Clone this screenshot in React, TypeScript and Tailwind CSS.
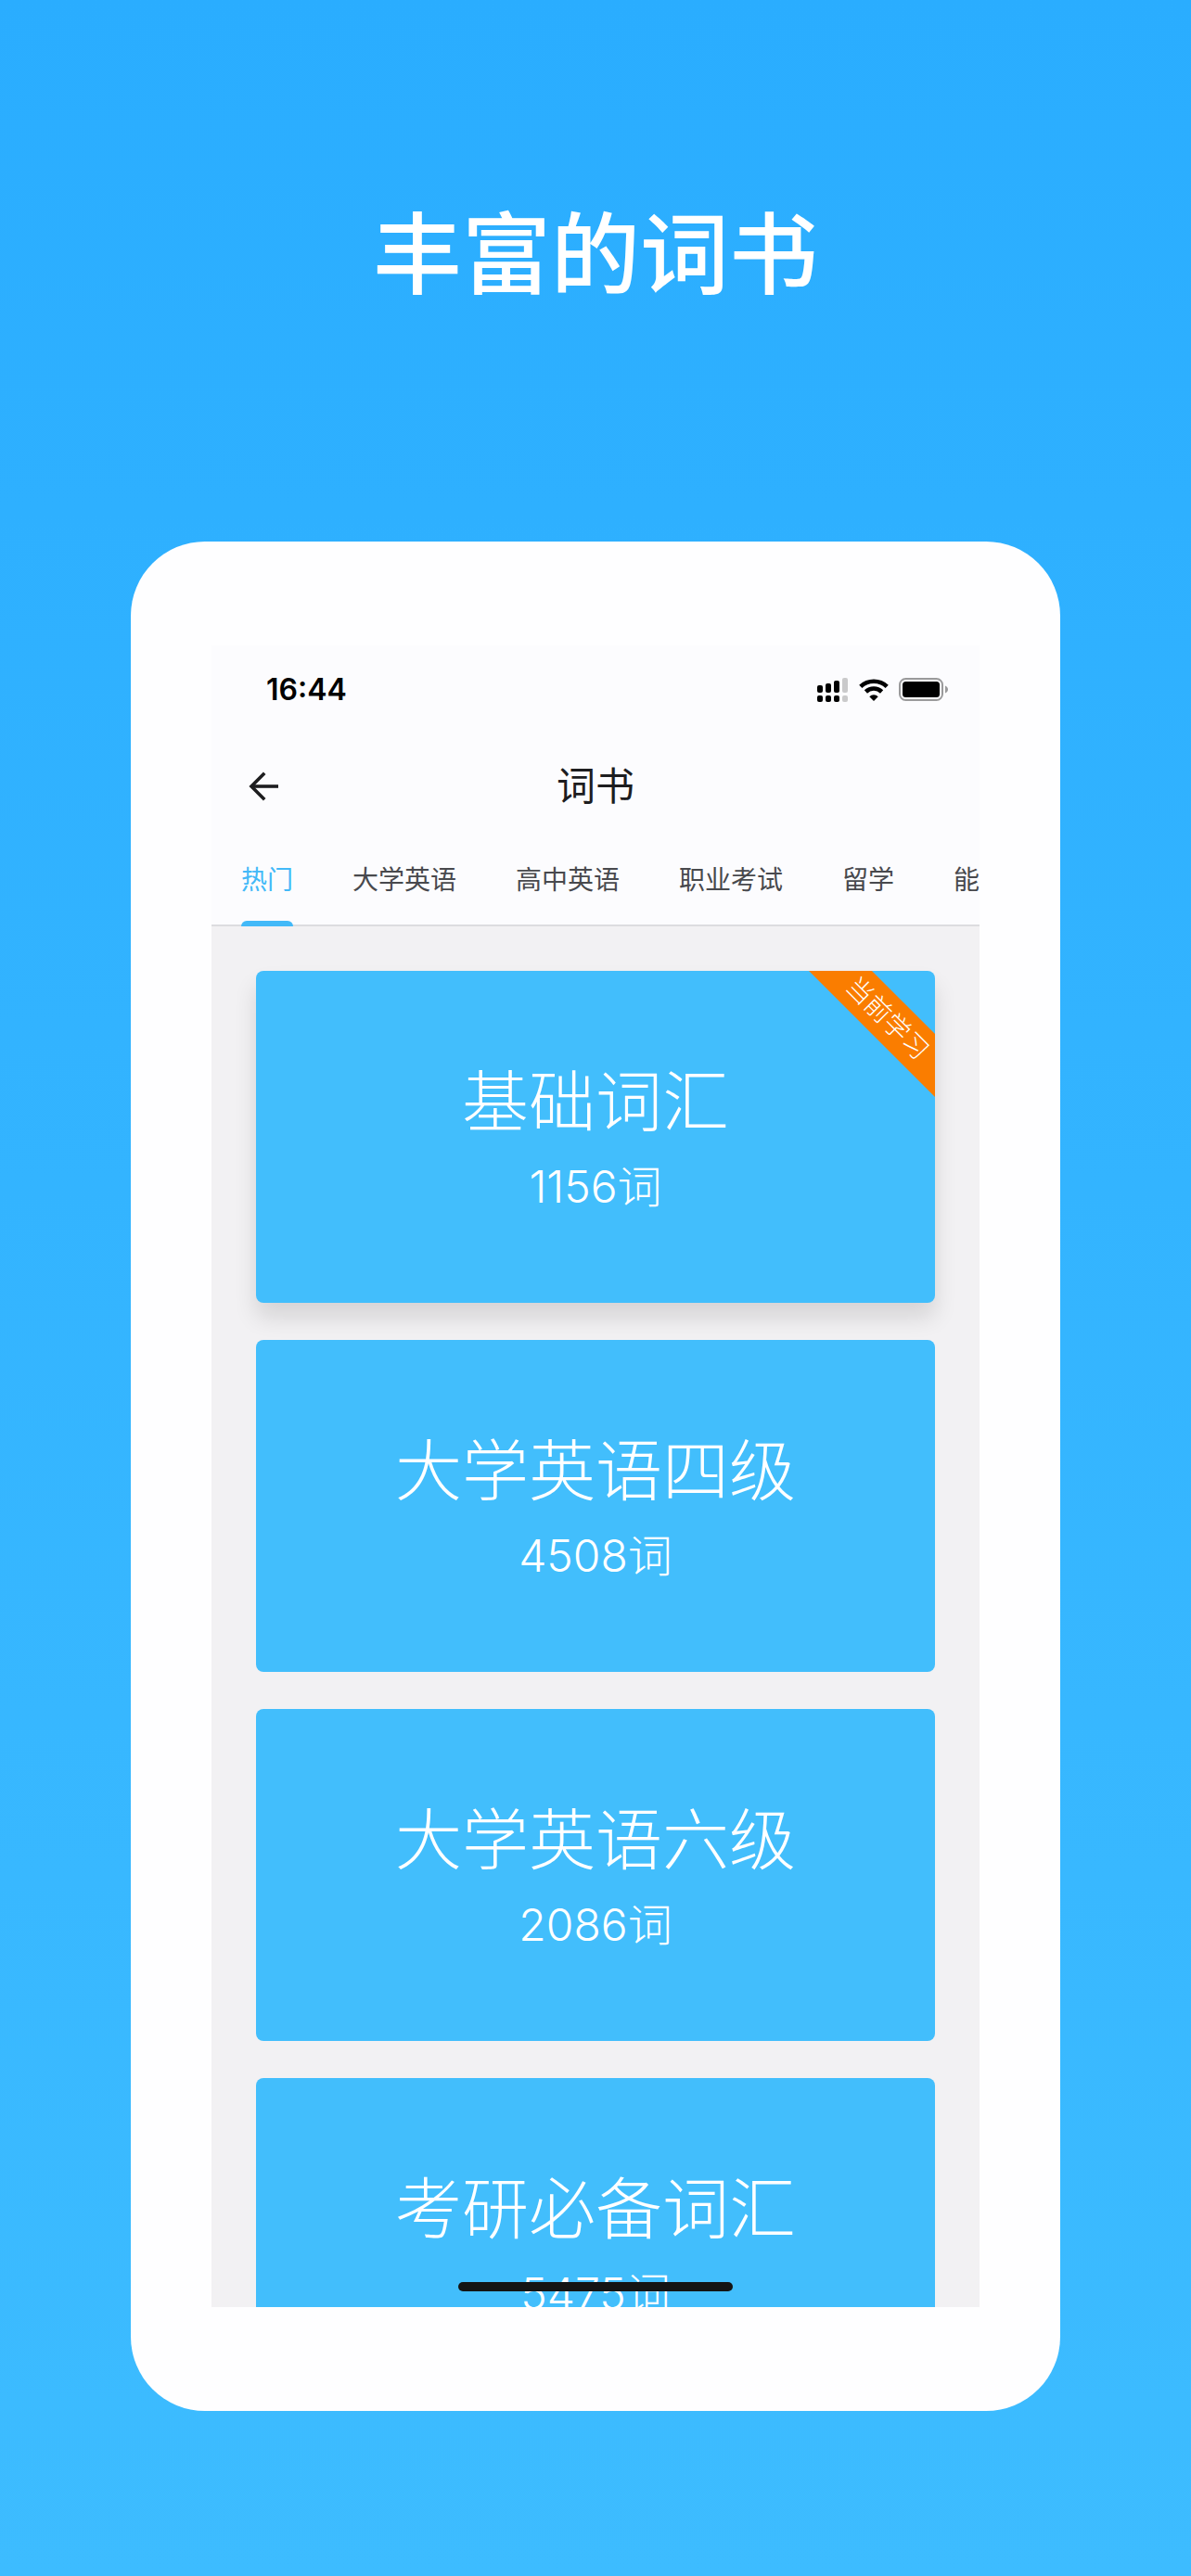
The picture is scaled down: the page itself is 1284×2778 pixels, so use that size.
import React from 'react';

interface WordBook {
  id: string;
  title: string;
  count: number;
  current?: boolean;
}

const tabs = ['热门', '大学英语', '高中英语', '职业考试', '留学', '能力提升'];

const books: WordBook[] = [
  { id: 'basic', title: '基础词汇', count: 1156, current: true },
  { id: 'cet4', title: '大学英语四级', count: 4508 },
  { id: 'cet6', title: '大学英语六级', count: 2086 },
  { id: 'kaoyan', title: '考研必备词汇', count: 5475 },
];

const SignalIcon = () => (
  <svg width="34" height="26" viewBox="0 0 34 26" aria-hidden="true">
    <g fill="#000">
      <rect x="0" y="8" width="6" height="8" rx="2" />
      <rect x="9" y="6" width="6" height="10" rx="2" />
      <rect x="18" y="3" width="6" height="13" rx="2" />
      <rect x="0" y="19" width="6" height="7" rx="2" />
      <rect x="9" y="19" width="6" height="7" rx="2" />
      <rect x="18" y="19" width="6" height="7" rx="2" />
    </g>
    <g fill="#cacacb">
      <rect x="27" y="0" width="6" height="16" rx="2" />
      <rect x="27" y="19" width="6" height="7" rx="2" />
    </g>
  </svg>
);

const WifiIcon = () => (
  <svg width="32" height="24" viewBox="0 0 32 24" aria-hidden="true">
    <g fill="none" stroke="#000" strokeWidth="4.6">
      <path d="M1.8 8.4A20.5 20.5 0 0 1 30.2 8.4" />
      <path d="M7.4 14A12.5 12.5 0 0 1 24.6 14" />
    </g>
    <path d="M16 24L11.3 19.2A6.8 6.8 0 0 1 20.7 19.2Z" fill="#000" />
  </svg>
);

const BatteryIcon = () => (
  <svg width="54" height="26" viewBox="0 0 54 26" aria-hidden="true">
    <rect x="1" y="1" width="46" height="23" rx="6.5" fill="none" stroke="#9a9a9b" strokeWidth="2" />
    <rect x="4" y="4" width="40" height="17" rx="3.5" fill="#000" />
    <path d="M50 8.5C52 9.3 53 10.8 53 12.5S52 15.7 50 16.5Z" fill="#9a9a9b" />
  </svg>
);

const BackIcon = () => (
  <svg width="32" height="32" viewBox="0 0 32 32" fill="none" stroke="#1d1d1f" aria-hidden="true">
    <path d="M32 16H3" strokeWidth="3.6" />
    <path d="M17.2 1.8L3 16L17.2 30.2" strokeWidth="3.6" />
  </svg>
);

const StatusBar: React.FC = () => (
  <div className="flex h-24 items-center justify-between pr-[33px] pl-[59px]">
    <span className="font-['Inter',sans-serif] text-[32px] leading-10 font-semibold text-black">16:44</span>
    <div className="flex items-center gap-[11px]">
      <SignalIcon />
      <WifiIcon />
      <BatteryIcon />
    </div>
  </div>
);

const BookCard: React.FC<{ book: WordBook }> = ({ book }) => (
  <button
    type="button"
    className={`relative flex h-[358px] w-full shrink-0 flex-col items-center justify-center overflow-hidden rounded-lg bg-[#42befc] font-light text-white ${
      book.current ? 'shadow-[0_16px_24px_rgba(0,0,0,0.12)]' : ''
    }`}
  >
    <span className="text-[72px] leading-[100px]">{book.title}</span>
    <span className="mt-2 text-5xl leading-[68px]">{book.count}词</span>
    {book.current && (
      <span className="absolute top-[27px] -right-[69px] w-60 rotate-45 bg-[#fa7d00] text-center text-[28px] leading-[48px]">
        当前学习
      </span>
    )}
  </button>
);

const App: React.FC = () => {
  return (
    <main className="min-h-screen bg-linear-to-b from-[#2aadff] to-[#3dbcff] px-[141px] pt-[204px] pb-[178px] font-['Inter','Noto_Sans_CJK_SC',sans-serif]">
      <h1 className="text-center text-8xl leading-[140px] font-medium text-white">丰富的词书</h1>

      <div className="mt-60 rounded-[80px] bg-[#fefeff] px-[87px] py-28">
        <div className="relative flex aspect-[828/1792] flex-col overflow-hidden bg-[#f2f1f3]">
          <header className="shrink-0 border-b-2 border-[#dcdcdf] bg-[#fcfcfe]">
            <StatusBar />
            <div className="grid h-28 grid-cols-[1fr_auto_1fr] items-center px-10">
              <button type="button" aria-label="返回" className="justify-self-start">
                <BackIcon />
              </button>
              <h2 className="text-[42px] leading-[60px] text-[#1d1d1f]">词书</h2>
            </div>
            <div role="tablist" className="-mb-0.5 flex h-[95px] gap-16 overflow-hidden px-8">
              {tabs.map((tab, i) => (
                <button
                  key={tab}
                  type="button"
                  role="tab"
                  aria-selected={i === 0}
                  className={`flex shrink-0 flex-col justify-between pt-6 text-[28px] leading-[42px] ${
                    i === 0 ? 'text-[#42b9f8]' : 'text-[#48494d]'
                  }`}
                >
                  {tab}
                  {i === 0 && <span className="h-1.5 w-full rounded-t-md bg-[#42b9f8]" />}
                </button>
              ))}
            </div>
          </header>

          <section className="flex flex-col gap-10 px-12 pt-12">
            {books.map((book) => (
              <BookCard key={book.id} book={book} />
            ))}
          </section>

          {/* home indicator */}
          <div className="absolute bottom-[17px] left-1/2 h-2.5 w-[296px] -translate-x-1/2 rounded-full bg-[#141414]" />
        </div>
      </div>
    </main>
  );
};

export default App;
